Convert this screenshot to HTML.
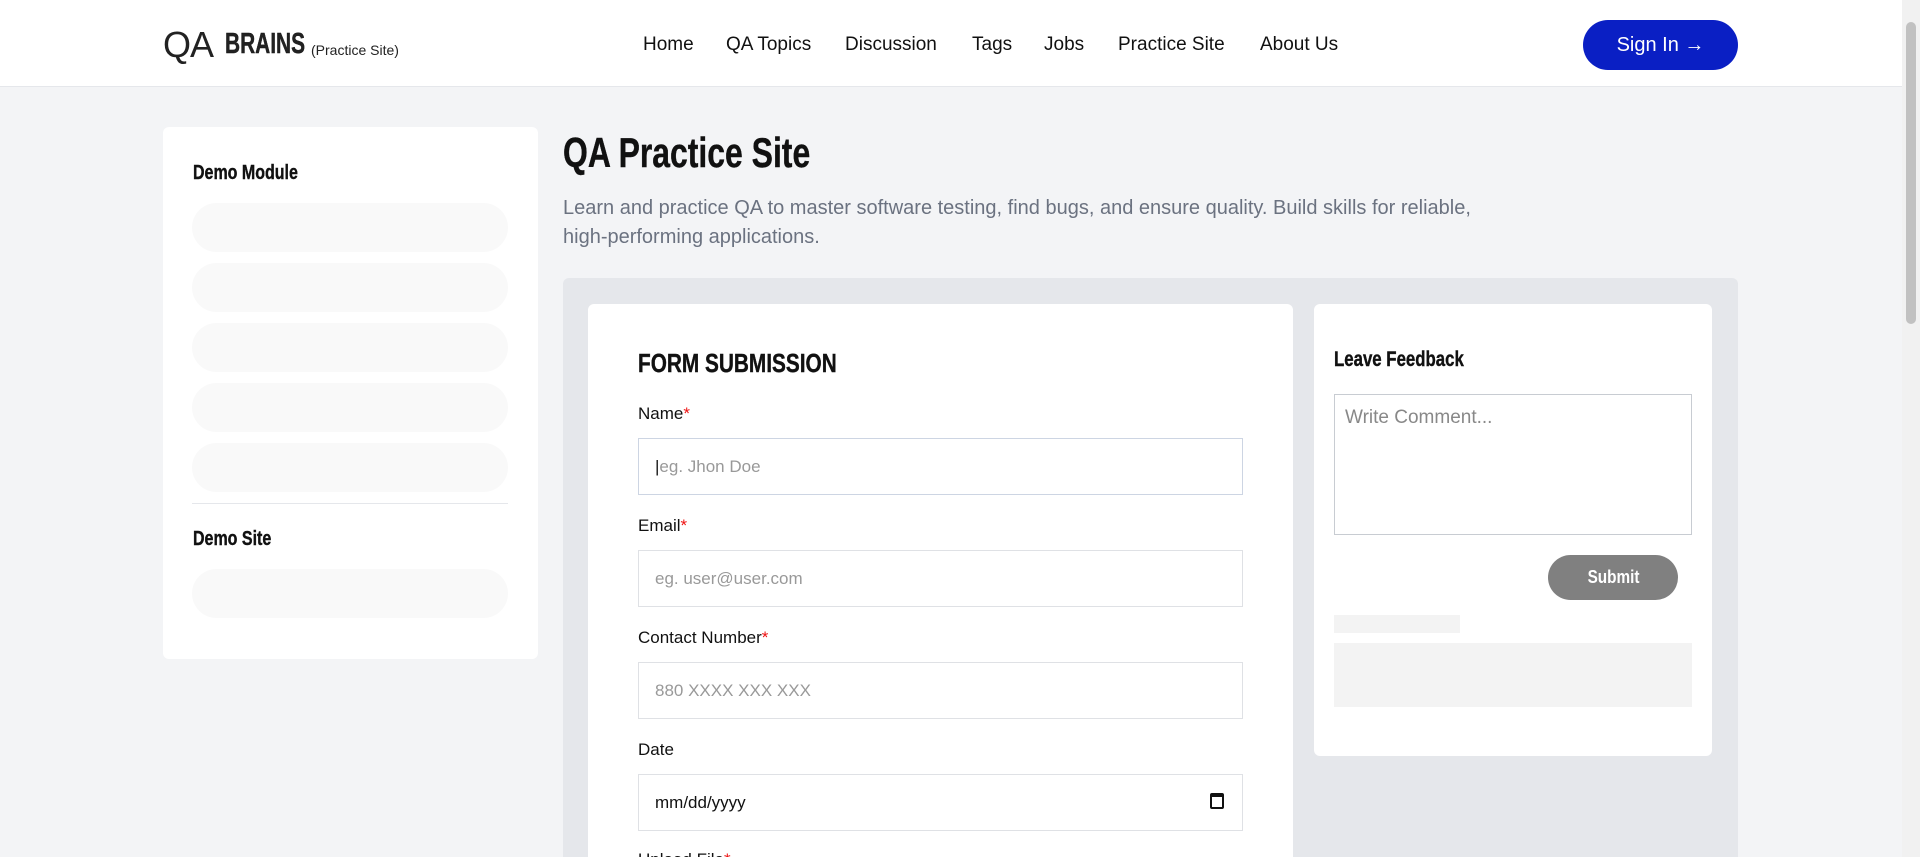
<!DOCTYPE html>
<html style="height:857px;overflow:hidden"><head><meta charset="utf-8"><style>
*{box-sizing:border-box;margin:0;padding:0}
body{width:1920px;height:857px;overflow:hidden;background:#f3f4f6;font-family:"Liberation Sans",sans-serif;color:#111;position:relative}
.abs{position:absolute}
.hdr{left:0;top:0;width:1902px;height:87px;background:#fff;border-bottom:1px solid #e5e7eb}
.nav a{position:absolute;top:34px;font-size:19px;color:#111;text-decoration:none}
.cond{font-family:"Liberation Sans",sans-serif;font-weight:bold;transform:scaleX(.8);transform-origin:left;white-space:nowrap;-webkit-text-stroke:.4px #111}
.pill{position:absolute;left:192px;width:316px;height:49px;border-radius:25px;background:#f9f9f9}
.lbl{position:absolute;left:638px;font-size:17px;color:#111}
.lbl span{color:#e11}
.inp{position:absolute;left:638px;width:605px;height:57px;border:1px solid #dfe1e5;background:#fff;font-size:17px;color:#999;padding:18px 0 0 16px}
</style></head><body>
<div class="abs hdr"></div>
<div class="abs" style="left:163px;top:24px;font-size:36px;color:#222;letter-spacing:-1px">QA</div>
<div class="abs cond" style="left:225px;top:28px;font-size:29px;color:#222;transform:scaleX(.72)">BRAINS</div>
<div class="abs" style="left:311px;top:42px;font-size:14px;color:#222">(Practice Site)</div>
<div class="nav">
<a style="left:643px">Home</a><a style="left:726px">QA Topics</a><a style="left:845px">Discussion</a><a style="left:972px">Tags</a><a style="left:1044px">Jobs</a><a style="left:1118px">Practice Site</a><a style="left:1260px">About Us</a>
</div>
<div class="abs" style="left:1583px;top:20px;width:155px;height:50px;border-radius:25px;background:#0a1fc4;color:#fff;font-size:20px;text-align:center;line-height:50px">Sign In →</div>
<div class="abs" style="left:1902px;top:0;width:18px;height:857px;background:#f1f1f1"></div>
<div class="abs" style="left:1906px;top:22px;width:10px;height:302px;background:#c1c1c1;border-radius:5px"></div>

<div class="abs" style="left:163px;top:127px;width:375px;height:532px;background:#fff;border-radius:6px"></div>
<div class="abs cond" style="left:193px;top:162px;font-size:20px">Demo Module</div>
<div class="pill" style="top:203px"></div><div class="pill" style="top:263px"></div><div class="pill" style="top:323px"></div><div class="pill" style="top:383px"></div><div class="pill" style="top:443px"></div>
<div class="abs" style="left:192px;top:503px;width:316px;height:1px;background:#e5e7eb"></div>
<div class="abs cond" style="left:193px;top:528px;font-size:20px">Demo Site</div>
<div class="pill" style="top:569px"></div>

<div class="abs cond" style="left:563px;top:129px;font-size:42px;transform:scaleX(.76)">QA Practice Site</div>
<div class="abs" style="left:563px;top:194px;width:920px;font-size:20px;line-height:29px;color:#6b7280">Learn and practice QA to master software testing, find bugs, and ensure quality. Build skills for reliable, high-performing applications.</div>
<div class="abs" style="left:563px;top:278px;width:1175px;height:579px;background:#e5e7eb;border-radius:6px 6px 0 0"></div>
<div class="abs" style="left:588px;top:304px;width:705px;height:553px;background:#fff;border-radius:6px 6px 0 0;overflow:hidden">
<div class="abs cond" style="left:50px;top:44px;font-size:26px">FORM SUBMISSION</div>
<div class="lbl" style="left:50px;top:100px">Name<span>*</span></div>
<div class="inp" style="left:50px;top:134px;border-color:#cdd5e3"><span style="color:#111">|</span>eg. Jhon Doe</div>
<div class="lbl" style="left:50px;top:212px">Email<span>*</span></div>
<div class="inp" style="left:50px;top:246px">eg. user@user.com</div>
<div class="lbl" style="left:50px;top:324px">Contact Number<span>*</span></div>
<div class="inp" style="left:50px;top:358px">880 XXXX XXX XXX</div>
<div class="lbl" style="left:50px;top:436px">Date</div>
<div class="inp" style="left:50px;top:470px;color:#111">mm/dd/yyyy<span style="position:absolute;right:18px;top:18px;width:14px;height:16px;border:2px solid #111;border-top-width:4px;border-radius:2px"></span></div>
<div class="lbl" style="left:50px;top:546px">Upload File<span>*</span></div>
</div>

<div class="abs" style="left:1314px;top:304px;width:398px;height:452px;background:#fff;border-radius:6px"></div>
<div class="abs cond" style="left:1334px;top:348px;font-size:21px">Leave Feedback</div>
<div class="abs" style="left:1334px;top:394px;width:358px;height:141px;border:1px solid #c8ccd2;font-size:19px;color:#888;padding:12px 10px">Write Comment...</div>
<div class="abs" style="left:1548px;top:555px;width:130px;height:45px;border-radius:23px;background:#808080;color:#fff;font-size:18px;font-weight:bold;text-align:center;line-height:45px"><span style="display:inline-block;transform:scaleX(.85)">Submit</span></div>
<div class="abs" style="left:1334px;top:615px;width:126px;height:18px;background:#f3f3f3"></div>
<div class="abs" style="left:1334px;top:643px;width:358px;height:64px;background:#f3f3f3"></div>
</body></html>
